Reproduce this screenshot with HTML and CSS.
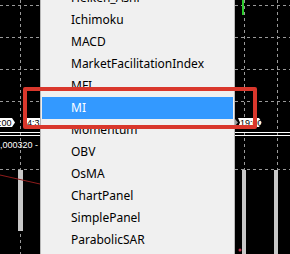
FILE: index.html
```html
<!DOCTYPE html>
<html lang="en">
<head>
  <meta charset="UTF-8">
  <title>Indicator menu</title>
  <link rel="stylesheet" href="styles.css">
</head>
<body>
  <div class="screen">
    <!-- chart to the left of the menu -->
    <svg class="chart chart-left" width="40" height="254" viewBox="0 0 40 254">
      <rect width="40" height="254" fill="#000"/>
      <g stroke="#9a9a9a" stroke-dasharray="3 3" stroke-width="1">
        <line x1="20.5" y1="0" x2="20.5" y2="254"/>
        <line x1="0" y1="5.5" x2="40" y2="5.5"/>
        <line x1="0" y1="37.5" x2="40" y2="37.5"/>
        <line x1="0" y1="69.5" x2="40" y2="69.5"/>
        <line x1="0" y1="101.5" x2="40" y2="101.5"/>
        <line x1="0" y1="169.5" x2="40" y2="169.5"/>
      </g>
      <rect x="0" y="132" width="40" height="1" fill="#fff"/>
      <rect x="0" y="135" width="40" height="1" fill="#fff"/>
      <path d="M-4 118 H12 L15 122.5 L12 127 H-4 Z" fill="#fff"/>
      <text x="-1" y="126" class="tag">:00</text>
      <rect x="26" y="118" width="16" height="9" fill="#fff"/>
      <text x="27" y="126" class="tag">4:3</text>
      <text x="0" y="148" class="axis">,000320 -</text>
      <rect x="18" y="170" width="5" height="61" fill="#c8c8c8"/>
      <line x1="0" y1="175" x2="40" y2="184" stroke="#8e1c1c" stroke-width="1"/>
    </svg>

    <div class="menu">
      <ul class="menu-list">
        <li class="menu-item">Heiken_Ashi</li>
        <li class="menu-item">Ichimoku</li>
        <li class="menu-item">MACD</li>
        <li class="menu-item">MarketFacilitationIndex</li>
        <li class="menu-item">MFI</li>
        <li class="menu-item active">MI</li>
        <li class="menu-item">Momentum</li>
        <li class="menu-item">OBV</li>
        <li class="menu-item">OsMA</li>
        <li class="menu-item">ChartPanel</li>
        <li class="menu-item">SimplePanel</li>
        <li class="menu-item">ParabolicSAR</li>
      </ul>
    </div>

    <!-- chart to the right of the menu -->
    <svg class="chart chart-right" width="55" height="254" viewBox="0 0 55 254">
      <rect width="55" height="254" fill="#000"/>
      <g stroke="#9a9a9a" stroke-dasharray="3 3" stroke-width="1">
        <line x1="9.5" y1="0" x2="9.5" y2="170"/>
        <line x1="42.5" y1="0" x2="42.5" y2="170"/>
        <line x1="0" y1="5.5" x2="55" y2="5.5"/>
        <line x1="0" y1="37.5" x2="55" y2="37.5"/>
        <line x1="0" y1="69.5" x2="55" y2="69.5"/>
        <line x1="0" y1="101.5" x2="55" y2="101.5"/>
        <line x1="0" y1="169.5" x2="55" y2="169.5"/>
      </g>
      <rect x="7" y="0" width="2" height="15" fill="#2ecc2e"/>
      <rect x="0" y="132" width="55" height="1" fill="#fff"/>
      <rect x="0" y="135" width="55" height="1" fill="#fff"/>
      <path d="M0 119 L3 122.5 L0 126 Z" fill="#9a9a9a"/>
      <path d="M3 118 H24 L27 122.5 L24 127 H3 L5 122.5 Z" fill="#fff"/>
      <text x="5" y="126" class="tag">19:00</text>
      <rect x="7" y="170" width="4" height="84" fill="#c8c8c8"/>
      <rect x="39" y="170" width="4" height="84" fill="#c8c8c8"/>
      <circle cx="5" cy="250" r="1.5" fill="#c0304a"/>
    </svg>

    <div class="highlight-box"></div>
  </div>
</body>
</html>
```

FILE: styles.css
```css
body {
  margin: 0;
  background: #000;
  overflow: hidden;
}
.screen {
  position: relative;
  width: 290px;
  height: 254px;
  display: flex;
  overflow: hidden;
}
.chart {
  display: block;
  flex: none;
}
.tag {
  font-family: "Liberation Sans", Arial, sans-serif;
  font-size: 9px;
  fill: #000;
}
.axis {
  font-family: "Liberation Sans", Arial, sans-serif;
  font-size: 9px;
  fill: #fff;
}
.menu {
  flex: none;
  width: 195px;
  height: 254px;
  background: #f0f0f0;
  border-left: 1px solid #b8b8b8;
  border-right: 1px solid #b8b8b8;
  box-sizing: border-box;
  overflow: hidden;
  padding: 0 1px;
}
.menu-list {
  list-style: none;
  margin: -13px 0 0;
  padding: 0;
}
.menu-item {
  height: 22px;
  line-height: 22px;
  padding-left: 29px;
  font-family: "Noto Sans", sans-serif;
  font-size: 12px;
  color: #000;
  white-space: nowrap;
}
.menu-item.active {
  background: #3399ff;
  color: #fff;
}
.highlight-box {
  position: absolute;
  left: 23px;
  top: 87px;
  width: 234px;
  height: 42px;
  border: 4px solid #d9372c;
  border-radius: 2px;
  box-sizing: border-box;
}
```
